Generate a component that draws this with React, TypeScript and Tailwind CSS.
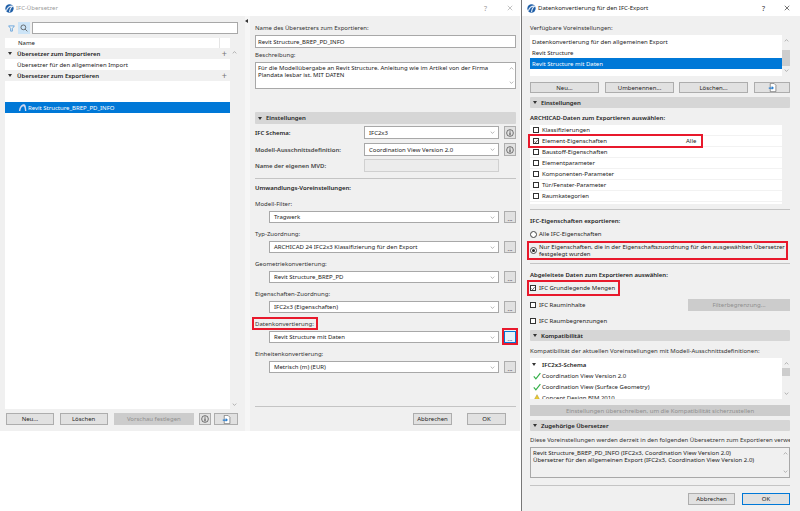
import type { ReactNode } from "react";

const Globe = () => (
  <svg viewBox="0 0 10 10" className="w-[9px] h-[9px] shrink-0">
    <circle cx="5" cy="5" r="4.6" fill="#1f5fa8" />
    <path d="M1.5 7.5C3 3.5 5.5 2 8.5 2.5C6.5 3.5 5.5 5.5 5 9" fill="none" stroke="#dfe9f5" strokeWidth="1.2" />
  </svg>
);

const ExportIcon = () => (
  <svg viewBox="0 0 12 12" className="w-[9px] h-[9px]">
    <path d="M3 .5H8L10.5 3V11.5H3Z" fill="#fff" stroke="#555" strokeWidth=".8" />
    <path d="M1 6H5V4L8 6.5L5 9V7.5H1Z" fill="#2a7fd0" />
  </svg>
);

const InfoIcon = () => (
  <svg viewBox="0 0 10 10" className="w-[8px] h-[8px]">
    <circle cx="5" cy="5" r="4.2" fill="none" stroke="#333" strokeWidth=".8" />
    <path d="M5 2.2V3.2M5 4.2V7.8" stroke="#333" strokeWidth="1.2" />
  </svg>
);

const Chevron = ({ up = false }: { up?: boolean }) => (
  <svg viewBox="0 0 8 5" className="w-[5px] h-[3px]">
    <path d={up ? "M1 4L4 1L7 4" : "M1 1L4 4L7 1"} fill="none" stroke="#8a8a8a" strokeWidth="1" />
  </svg>
);

const Tri = () => <span className="w-0 h-0 border-x-[2px] border-x-transparent border-t-[3px] border-t-[#333] shrink-0" />;

const Check = () => (
  <svg viewBox="0 0 10 10" className="w-[8px] h-[8px] shrink-0">
    <path d="M1 5.5L3.6 8.5L9.2 1.5" fill="none" stroke="#35b04a" strokeWidth="1.5" />
  </svg>
);

const Label = ({ children, bold = false }: { children: ReactNode; bold?: boolean }) => (
  <div className={`h-[8px] flex items-center whitespace-nowrap ${bold ? "font-semibold text-[#222]" : "text-[#333]"}`}>{children}</div>
);

const Header = ({ children, h = "h-[11px]" }: { children: ReactNode; h?: string }) => (
  <div className={`${h} bg-[#d6d6d6] flex items-center gap-[4px] pl-[3px] font-semibold text-[#222] rounded-[1px]`}>
    <Tri />
    {children}
  </div>
);

const Btn = ({ children, className = "", disabled = false }: { children?: ReactNode; className?: string; disabled?: boolean }) => (
  <div
    className={`flex items-center justify-center border whitespace-nowrap ${
      disabled ? "bg-[#cccccc] border-[#cccccc] text-[#8f8f8f]" : "bg-[#e1e1e1] border-[#adadad] text-[#222]"
    } ${className}`}
  >
    {children}
  </div>
);

const Select = ({ children, className = "" }: { children: ReactNode; className?: string }) => (
  <div className={`h-[12px] bg-white border border-[#a8a8a8] flex items-center justify-between pl-[4px] pr-[3px] text-[#222] whitespace-nowrap ${className}`}>
    {children}
    <Chevron />
  </div>
);

const Divider = () => <div className="h-px bg-[#c4c4c4]" />;

const Box = ({ on = false }: { on?: boolean }) => (
  <span className="w-[6px] h-[6px] border border-[#333] bg-white flex items-center justify-center shrink-0">
    {on && (
      <svg viewBox="0 0 6 6" className="w-[5px] h-[5px]">
        <path d="M.8 3L2.4 4.8L5.4 1" fill="none" stroke="#222" strokeWidth="1" />
      </svg>
    )}
  </span>
);

const Radio = ({ on = false }: { on?: boolean }) => (
  <span className="w-[7px] h-[7px] rounded-full border border-[#444] bg-white flex items-center justify-center shrink-0">
    {on && <span className="w-[3px] h-[3px] rounded-full bg-[#222]" />}
  </span>
);

const Scroll = ({ thumb = "h-[16px]", mt = "mt-[11px]" }: { thumb?: string; mt?: string }) => (
  <div className="w-[8px] flex flex-col items-center justify-between py-[4px] relative">
    <Chevron up />
    <div className={`absolute left-0 top-[4px] w-[8px] bg-[#cdcdcd] ${thumb} ${mt}`} />
    <Chevron />
  </div>
);

function LeftPane() {
  return (
    <div className="w-[245px] pl-[5px] pr-[7px] flex flex-col">
      <div className="mt-[6px] h-[12px] flex items-center">
        <svg viewBox="0 0 8 8" className="w-[7px] h-[7px] ml-[3px]">
          <path d="M.7 1H7.3L5 4V7H3V4Z" fill="none" stroke="#3f8fd8" strokeWidth=".8" />
        </svg>
        <div className="ml-[3px] w-[12px] h-[12px] bg-[#cce4f7] flex items-center justify-center">
          <svg viewBox="0 0 10 10" className="w-[8px] h-[8px]">
            <circle cx="4.2" cy="4.2" r="3" fill="none" stroke="#444" strokeWidth=".9" />
            <path d="M6.4 6.4L9.2 9.2" stroke="#444" strokeWidth=".9" />
          </svg>
        </div>
        <div className="ml-[2px] flex-1 h-[12px] bg-white border border-[#a8a8a8]" />
      </div>
      <div className="mt-[4px] h-[371px] flex">
        <div className="w-[225px] bg-white flex flex-col">
          <div className="h-[10px] flex items-center pl-[13px] text-[#222]">
            <span className="flex-1">Name</span>
            <span className="w-[11px] h-full border-l border-[#e5e5e5]" />
          </div>
          <div className="h-[11px] bg-[#f0f0f0] flex items-center pl-[3px] font-semibold text-[#222]">
            <Tri />
            <span className="ml-[5px] flex-1">Übersetzer zum Importieren</span>
            <span className="mr-[3px] text-[9px] font-normal leading-none text-[#777]">+</span>
          </div>
          <div className="h-[11px] flex items-center pl-[12px] text-[#222]">Übersetzer für den allgemeinen Import</div>
          <div className="h-[11px] bg-[#f0f0f0] flex items-center pl-[3px] font-semibold text-[#222]">
            <Tri />
            <span className="ml-[5px] flex-1">Übersetzer zum Exportieren</span>
            <span className="mr-[3px] text-[9px] font-normal leading-none text-[#777]">+</span>
          </div>
          <div className="mt-[21px] h-[11px] bg-[#0078d7] flex items-center pl-[13px] text-white">
            <svg viewBox="0 0 10 10" className="w-[9px] h-[9px] shrink-0">
              <path d="M1 9C1.5 4 4 1.5 6.5 1.5C8 1.5 9 3 9.3 9H7.8C7.6 5 7 3.5 5.8 3.5C4 3.5 3 6 2.6 9Z" fill="#cfd6ee" />
            </svg>
            <span className="ml-[1px]">Revit Structure_BREP_PD_INFO</span>
          </div>
        </div>
        <div className="w-[8px] flex flex-col items-center justify-between pt-[13px] pb-[3px]">
          <Chevron up />
          <Chevron />
        </div>
      </div>
      <div className="mt-[4px] h-[12px] flex items-stretch pl-[1px]">
        <Btn className="w-[48px]">Neu...</Btn>
        <Btn className="ml-[6px] w-[48px]">Löschen</Btn>
        <Btn disabled className="ml-[6px] w-[81px]">Vorschau festlegen</Btn>
        <Btn className="ml-[5px] w-[12px]"><InfoIcon /></Btn>
        <Btn className="ml-[3px] w-[24px]"><ExportIcon /></Btn>
      </div>
    </div>
  );
}

const mappings = [
  { label: "Modell-Filter:", value: "Tragwerk" },
  { label: "Typ-Zuordnung:", value: "ARCHICAD 24 IFC2x3 Klassifizierung für den Export" },
  { label: "Geometriekonvertierung:", value: "Revit Structure_BREP_PD" },
  { label: "Eigenschaften-Zuordnung:", value: "IFC2x3 (Eigenschaften)" },
  { label: "Datenkonvertierung:", value: "Revit Structure mit Daten", marked: true },
  { label: "Einheitenkonvertierung:", value: "Metrisch (m) (EUR)" },
];

function MainPane() {
  return (
    <div className="flex-1 pl-[5px] pr-[4px] flex flex-col">
      <div className="mt-[8px]"><Label>Name des Übersetzers zum Exportieren:</Label></div>
      <div className="mt-[3px] h-[13px] bg-white border border-[#a8a8a8] flex items-center pl-[2px] text-[#222]">Revit Structure_BREP_PD_INFO</div>
      <div className="mt-[3px]"><Label>Beschreibung:</Label></div>
      <div className="mt-[3px] h-[27px] bg-white border border-[#a8a8a8] flex text-[#222] leading-[7px]">
        <div className="flex-1 pl-[2px] pt-[2px]">
          Für die Modellübergabe an Revit Structure. Anleitung wie im Artikel von der Firma
          <br />
          Plandata lesbar ist. MIT DATEN
        </div>
        <div className="w-[8px] flex flex-col items-center justify-between py-[4px]">
          <Chevron up />
          <Chevron />
        </div>
      </div>
      <div className="mt-[23px]"><Header h="h-[12px]">Einstellungen</Header></div>
      <div className="mt-[2px] h-[13px] flex items-center">
        <span className="w-[109px] font-semibold text-[#222]">IFC Schema:</span>
        <Select className="w-[135px] !h-[13px]">IFC2x3</Select>
        <Btn className="ml-[5px] w-[12px] h-[13px]"><InfoIcon /></Btn>
      </div>
      <div className="mt-[4px] h-[13px] flex items-center">
        <span className="w-[109px] font-semibold text-[#444]">Modell-Ausschnittsdefinition:</span>
        <Select className="w-[135px] !h-[13px]">Coordination View Version 2.0</Select>
        <Btn className="ml-[5px] w-[12px] h-[13px]"><InfoIcon /></Btn>
      </div>
      <div className="mt-[3px] h-[13px] flex items-center">
        <span className="w-[109px] font-semibold text-[#444]">Name der eigenen MVD:</span>
        <div className="w-[135px] h-[13px] bg-[#ececec] border border-[#d0d0d0]" />
      </div>
      <div className="mt-[6px]"><Divider /></div>
      <div className="mt-[5px]"><Label bold>Umwandlungs-Voreinstellungen:</Label></div>
      <div className="mt-[8px] flex flex-col gap-[7px]">
        {mappings.map((m) => (
          <div key={m.label}>
            <div className="relative">
              <Label>{m.label}</Label>
              {m.marked && <div className="absolute -left-[3px] -top-[3px] w-[66px] h-[13px] border-2 border-[#e8192c]" />}
            </div>
            <div className="mt-[3px] flex items-center">
              <Select className="ml-[14px] w-[230px]">{m.value}</Select>
              <div className="relative ml-[5px]">
                <Btn className={`w-[12px] h-[12px] items-end ${m.marked ? "!border-[#0078d7] !bg-[#e5f1fb]" : ""}`}>...</Btn>
                {m.marked && <div className="absolute -left-[2px] -right-[2px] -top-[3px] -bottom-[2px] border-2 border-[#e8192c]" />}
              </div>
            </div>
          </div>
        ))}
      </div>
      <div className="mt-[33px]"><Divider /></div>
      <div className="mt-[6px] h-[12px] flex justify-end gap-[15px] pr-[10px]">
        <Btn className="w-[39px]">Abbrechen</Btn>
        <Btn className="w-[39px]">OK</Btn>
      </div>
    </div>
  );
}

const presets = ["Datenkonvertierung für den allgemeinen Export", "Revit Structure"];
const archicadData = ["Klassifizierungen", "Element-Eigenschaften", "Baustoff-Eigenschaften", "Elementparameter", "Komponenten-Parameter", "Tür/Fenster-Parameter", "Raumkategorien"];

function DataWindow() {
  return (
    <div className="absolute left-[521px] top-0 w-[279px] h-[511px] bg-[#f0f0f0] border-l border-[#777] flex flex-col">
      <div className="h-[16px] bg-white flex items-center pl-[5px] pr-[10px] text-[#222]">
        <Globe />
        <span className="ml-[2px] flex-1">Datenkonvertierung für den IFC-Export</span>
        <span className="text-[7px] text-[#333] mr-[19px]">?</span>
        <svg viewBox="0 0 8 8" className="w-[6px] h-[6px]">
          <path d="M1 1L7 7M7 1L1 7" stroke="#333" strokeWidth=".9" />
        </svg>
      </div>
      <div className="pl-[8px] pr-[10px] flex flex-col">
        <div className="mt-[8px]"><Label>Verfügbare Voreinstellungen:</Label></div>
        <div className="mt-[3px] h-[41px] flex">
          <div className="w-[252px] bg-white pt-[1px] text-[#222]">
            {presets.map((p) => (
              <div key={p} className="h-[11px] flex items-center pl-[2px]">{p}</div>
            ))}
            <div className="h-[11px] bg-[#0078d7] text-white flex items-center pl-[2px]">Revit Structure mit Daten</div>
          </div>
          <Scroll />
        </div>
        <div className="mt-[6px] h-[11px] flex">
          <Btn className="w-[69px]">Neu...</Btn>
          <Btn className="ml-[6px] w-[69px]">Umbenennen...</Btn>
          <Btn className="ml-[5px] w-[69px]">Löschen...</Btn>
          <Btn className="ml-[6px] w-[36px]"><ExportIcon /></Btn>
        </div>
        <div className="mt-[4px]"><Header>Einstellungen</Header></div>
        <div className="mt-[6px]"><Label bold>ARCHICAD-Daten zum Exportieren auswählen:</Label></div>
        <div className="mt-[3px] w-[252px] h-[79px] bg-white text-[#222]">
          {archicadData.map((d) => {
            const on = d === "Element-Eigenschaften";
            return (
              <div key={d} className="relative h-[11px] flex items-center gap-[3px] pl-[3px] border-b border-[#f2f2f2]">
                <Box on={on} />
                <span>{d}</span>
                {on && <span className="absolute left-[156px]">Alle</span>}
                {on && <div className="absolute -left-[2px] -top-[2px] w-[175px] h-[14px] border-2 border-[#e8192c]" />}
              </div>
            );
          })}
        </div>
        <div className="mt-[5px]"><Divider /></div>
        <div className="mt-[7px]"><Label bold>IFC-Eigenschaften exportieren:</Label></div>
        <div className="mt-[5px] h-[8px] flex items-center gap-[2px] text-[#222]">
          <Radio />
          <span>Alle IFC-Eigenschaften</span>
        </div>
        <div className="mt-[3px] -ml-[3px] w-[261px] h-[19px] border-2 border-[#e8192c] flex items-center gap-[2px] pl-[1px] text-[#222] leading-[7px]">
          <Radio on />
          <span className="whitespace-nowrap">
            Nur Eigenschaften, die in der Eigenschaftszuordnung für den ausgewählten Übersetzer
            <br />
            festgelegt wurden
          </span>
        </div>
        <div className="mt-[3px]"><Divider /></div>
        <div className="mt-[7px]"><Label bold>Abgeleitete Daten zum Exportieren auswählen:</Label></div>
        <div className="mt-[1px] -ml-[3px] w-[93px] h-[16px] border-2 border-[#e8192c] flex items-center gap-[3px] pl-[1px] text-[#222]">
          <Box on />
          <span>IFC Grundlegende Mengen</span>
        </div>
        <div className="mt-[3px] h-[12px] flex items-center gap-[3px] text-[#222]">
          <Box />
          <span className="flex-1">IFC Rauminhalte</span>
          <Btn disabled className="w-[102px] h-[12px]">Filterbegrenzung...</Btn>
        </div>
        <div className="mt-[6px] h-[8px] flex items-center gap-[3px] text-[#222]">
          <Box />
          <span>IFC Raumbegrenzungen</span>
        </div>
        <div className="mt-[5px]"><Header>Kompatibilität</Header></div>
        <div className="mt-[6px]"><Label>Kompatibilität der aktuellen Voreinstellungen mit Modell-Ausschnittsdefinitionen:</Label></div>
        <div className="mt-[3px] h-[41px] flex">
          <div className="w-[252px] bg-white text-[#222] overflow-hidden">
            <div className="h-[12px] flex items-center pl-[2px] pt-[1px] font-semibold">
              <Tri />
              <span className="ml-[6px]">IFC2x3-Schema</span>
            </div>
            <div className="h-[11px] flex items-center pl-[3px] gap-[1px]"><Check />Coordination View Version 2.0</div>
            <div className="h-[11px] flex items-center pl-[3px] gap-[1px]"><Check />Coordination View (Surface Geometry)</div>
            <div className="h-[11px] flex items-center pl-[3px] gap-[1px]">
              <svg viewBox="0 0 10 10" className="w-[8px] h-[8px] shrink-0">
                <path d="M5 .8L9.5 9H.5Z" fill="#e9c92f" stroke="#9a8420" strokeWidth=".5" />
              </svg>
              Concept Design BIM 2010
            </div>
          </div>
          <Scroll thumb="h-[8px]" mt="mt-[6px]" />
        </div>
        <Btn disabled className="mt-[6px] h-[11px]">Einstellungen überschreiben, um die Kompatibilität sicherzustellen</Btn>
        <div className="mt-[4px]"><Header>Zugehörige Übersetzer</Header></div>
        <div className="mt-[5px] overflow-hidden"><Label>Diese Voreinstellungen werden derzeit in den folgenden Übersetzern zum Exportieren verwer</Label></div>
        <div className="mt-[3px] h-[31px] border border-[#a8a8a8] flex text-[#222] leading-[7px]">
          <div className="flex-1 pl-[2px] pt-[2px] whitespace-nowrap">
            Revit Structure_BREP_PD_INFO (IFC2x3, Coordination View Version 2.0)
            <br />
            Übersetzer für den allgemeinen Export (IFC2x3, Coordination View Version 2.0)
          </div>
          <div className="w-[8px] flex flex-col items-center justify-between py-[4px]">
            <Chevron up />
            <Chevron />
          </div>
        </div>
        <div className="mt-[7px]"><Divider /></div>
        <div className="mt-[7px] h-[12px] flex justify-end gap-[7px]">
          <Btn className="w-[47px]">Abbrechen</Btn>
          <Btn className="w-[48px] !border-[#0078d7]">OK</Btn>
        </div>
      </div>
    </div>
  );
}

export default function App() {
  return (
    <div className="relative w-[800px] h-[511px] overflow-hidden bg-white font-['Noto_Sans',sans-serif] text-[6px] leading-none">
      {/* IFC-Übersetzer window */}
      <div className="absolute left-0 top-0 w-[520px] h-[431px] bg-[#f0f0f0] flex flex-col">
        <div className="h-[16px] bg-white flex items-center pl-[5px] pr-[7px] text-[#9a9a9a]">
          <Globe />
          <span className="ml-[2px] flex-1">IFC-Übersetzer</span>
          <span className="mr-[20px] text-[7px]">?</span>
          <svg viewBox="0 0 8 8" className="w-[6px] h-[6px]">
            <path d="M1 1L7 7M7 1L1 7" stroke="#9a9a9a" strokeWidth=".8" />
          </svg>
        </div>
        <div className="flex-1 flex">
          <LeftPane />
          <div className="w-[5px] bg-[#f6f6f6] relative">
            <span className="absolute left-0 top-[3px] w-0 h-0 border-y-[2px] border-y-transparent border-r-[3px] border-r-[#333]" />
          </div>
          <MainPane />
        </div>
      </div>
      <DataWindow />
    </div>
  );
}
